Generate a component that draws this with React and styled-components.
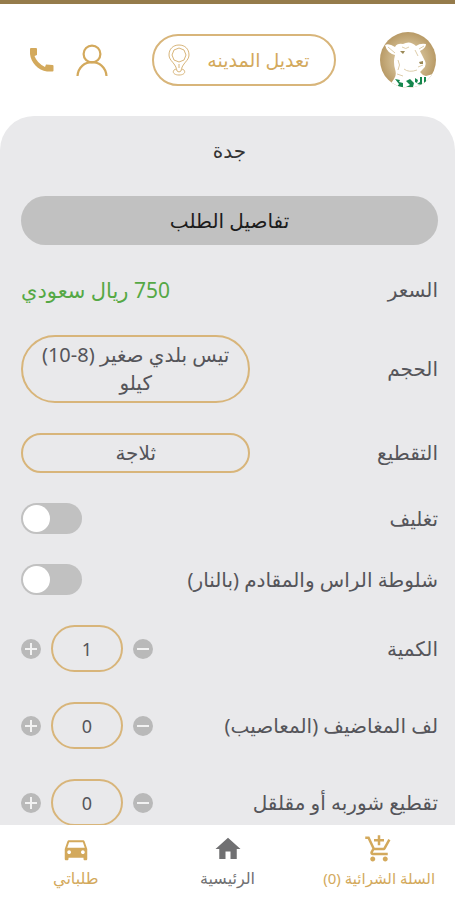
import React, { useState } from 'react';
import styled, { createGlobalStyle } from 'styled-components';
import { MdHome, MdDirectionsCar, MdAddShoppingCart } from 'react-icons/md';

const gold = '#d3a95c';
const outline = '#d8b57a';

const GlobalStyle = createGlobalStyle`
  * {
    box-sizing: border-box;
  }

  body {
    margin: 0;
    background: #fff;
    color: #55555a;
    font-family: 'Noto Sans', 'DejaVu Sans', sans-serif;
    font-size: 20px;
    line-height: 28px;
  }

  button, input {
    font: inherit;
    color: inherit;
  }

  button {
    cursor: pointer;
  }
`;

const Page = styled.div`
  display: flex;
  flex-direction: column;
  min-height: 100vh;
  border-top: 4px solid #957b4b;
`;

const Header = styled.header`
  display: flex;
  align-items: center;
  justify-content: space-between;
  height: 112px;
  padding: 0 18px 0 26px;
`;

const LogoLink = styled.a`
  display: flex;
`;

const CityButton = styled.button`
  display: flex;
  align-items: center;
  justify-content: space-between;
  width: 184px;
  height: 52px;
  padding: 0 24px 0 14px;
  border: 2px solid ${outline};
  border-radius: 26px;
  background: none;
  color: ${gold};
  font-size: 19px;
`;

const HeaderIcons = styled.div`
  display: flex;
  align-items: center;
  gap: 20px;
`;

const IconLink = styled.a`
  display: flex;
  color: ${gold};
`;

const Panel = styled.main`
  display: flex;
  flex: 1;
  flex-direction: column;
  gap: 30px;
  padding: 20px 17px 108px 21px;
  border-radius: 34px 34px 0 0;
  background: #e9e9eb;
`;

const City = styled.h1`
  margin: 0;
  color: #333;
  font-size: 20px;
  font-weight: 400;
  line-height: 30px;
  text-align: center;
`;

const SectionTitle = styled.h2`
  margin: 0;
  border-radius: 25px;
  background: #c1c1c1;
  color: #1c1c1c;
  font-size: 20px;
  font-weight: 400;
  line-height: 49px;
  text-align: center;
`;

const Row = styled.div`
  display: flex;
  align-items: center;
  justify-content: space-between;
`;

const Price = styled.span`
  color: #55a845;
  font-size: 21px;
  line-height: 30px;
`;

const Choice = styled.button`
  width: 55%;
  padding: 4px 12px;
  border: 2px solid ${outline};
  border-radius: 35px;
  background: none;
`;

const Switch = styled.input`
  display: flex;
  flex: none;
  width: 61px;
  height: 31px;
  margin: 0;
  padding: 2px;
  border-radius: 16px;
  background: #c1c1c1;
  appearance: none;
  direction: ltr;
  cursor: pointer;

  &::before {
    content: '';
    width: 27px;
    height: 27px;
    border-radius: 50%;
    background: #fff;
  }

  &:checked {
    justify-content: flex-end;
    background: ${gold};
  }
`;

const Stepper = styled.div`
  display: flex;
  align-items: center;
  gap: 10px;
`;

const StepButton = styled.button`
  display: flex;
  padding: 0;
  border: 0;
  border-radius: 50%;
  background: #b9b9b9;
  color: #f2f2f2;
`;

const Quantity = styled.input`
  width: 72px;
  height: 47px;
  padding: 0;
  border: 2px solid ${outline};
  border-radius: 24px;
  background: none;
  font-size: 18px;
  text-align: center;
`;

const TabBar = styled.nav`
  position: fixed;
  right: 0;
  bottom: 0;
  left: 0;
  display: grid;
  grid-template-columns: repeat(3, 1fr);
  height: 75px;
  padding-top: 9px;
  background: #fff;
`;

const Tab = styled.a`
  display: flex;
  flex-direction: column;
  align-items: center;
  color: ${(props) => (props.$active ? '#707072' : gold)};
  font-size: ${(props) => (props.$long ? '15px' : '16px')};
  line-height: 28px;
  text-decoration: none;
  white-space: nowrap;
`;

const Logo = () => (
  <svg width="58" height="58" viewBox="0 0 58 58" role="img" aria-label="الشعار">
    <defs>
      <radialGradient id="coin">
        <stop offset="0" stopColor="#dfcfae" />
        <stop offset="0.6" stopColor="#cdb68a" />
        <stop offset="1" stopColor="#b89a66" />
      </radialGradient>
      <clipPath id="coin-edge">
        <circle cx="29" cy="29" r="28" />
      </clipPath>
    </defs>
    <circle cx="29" cy="29" r="28" fill="url(#coin)" />
    <g clipPath="url(#coin-edge)">
      <path
        d="M6 14 Q10 12 16 16 Q18 12 24 13 Q31 9 37 15 Q41 12 47 13 Q47 17 41 20 Q43 24 46 30 Q48 35 44 38 L41 41 Q43 44 47 45 L54 43 V58 H8 L15 48 Q18 44 16 38 Q14 31 16 24 Q8 22 6 14Z"
        fill="#fff"
      />
      <path
        d="M9 16 L16 22 M45 15 L40 18 M19 29 Q22 34 19 39 M25 38 Q30 42 38 39 M36 19 L39 25 M18 43 L24 45 M39 36 L44 34 M23 16 Q27 19 30 16"
        fill="none"
        stroke="#ddcdab"
        strokeWidth="1"
      />
      <path d="M21 20 L26 20 L24 23Z M40 31 L44 30 L44 33 L41 33Z" fill="#9a8957" />
      <path
        d="M16 48 L21 49 L20 51 L24 52 L24 56 H18 L20 53Z M27 50 L31 48 L35 52 L34 56 L27 56 L31 54Z M36 47 L39 49 L38 52 L36 51Z M38 53 L41 51 L41 46 L43 46 L43 54Z M45 46 H47 V52 H45Z"
        fill="#15864d"
      />
    </g>
  </svg>
);

const PinIcon = () => (
  <svg width="22" height="32" viewBox="0 0 22 32" fill="none" stroke={outline} strokeWidth="1" aria-hidden="true">
    <path d="M11 1 C5 1 1 5 1 11 C1 17 8 19 9 27 Q11 29 13 27 C14 19 21 17 21 11 C21 5 17 1 11 1Z" />
    <path d="M11 4 L16 6 L18 11 L16 16 L11 18 L6 16 L4 11 L6 6Z" />
    <path d="M8 25 C4 26 4 31 11 31 C18 31 18 26 14 25 M11 20 V24" />
  </svg>
);

const UserIcon = () => (
  <svg width="32" height="33" viewBox="0 0 32 33" fill="none" stroke="currentColor" strokeWidth="2.2" aria-hidden="true">
    <circle cx="16" cy="10" r="8.4" />
    <path d="M1.5 32 C3 13.6 29 13.6 30.5 32" />
  </svg>
);

const PhoneIcon = () => (
  <svg width="30" height="30" viewBox="0 0 30 30" fill="currentColor" aria-hidden="true">
    <path d="M5 3 H10 Q11 3 11 4 V10 L8.5 11 Q11 18 19 22 L20 19.5 L26.5 20 Q27.500 20 27.500 21 V25.500 Q27.500 26.500 26.500 26.500 H21 C12 25 5 18 4 9 V4 Q4 3 5 3Z" />
  </svg>
);

const StepIcon = ({ plus }) => (
  <svg width="20" height="20" viewBox="0 0 20 20" stroke="currentColor" strokeWidth="2" aria-hidden="true">
    <path d={plus ? 'M4 10 H16 M10 4 V16' : 'M4 10 H16'} />
  </svg>
);

const QuantityRow = ({ id, label, initial }) => {
  const [count, setCount] = useState(initial);

  return (
    <Row>
      <label htmlFor={id}>{label}</label>
      <Stepper>
        <StepButton type="button" aria-label="إنقاص" onClick={() => setCount(Math.max(0, count - 1))}>
          <StepIcon />
        </StepButton>
        <Quantity
          id={id}
          inputMode="numeric"
          value={count}
          onChange={(event) => setCount(Number(event.target.value) || 0)}
        />
        <StepButton type="button" aria-label="زيادة" onClick={() => setCount(count + 1)}>
          <StepIcon plus />
        </StepButton>
      </Stepper>
    </Row>
  );
};

const App = () => (
  <Page dir="rtl" lang="ar">
    <GlobalStyle />
    <Header>
      <LogoLink href="#home"><Logo /></LogoLink>
      <CityButton type="button">
        تعديل المدينه
        <PinIcon />
      </CityButton>
      <HeaderIcons>
        <IconLink href="#account" aria-label="حسابي"><UserIcon /></IconLink>
        <IconLink href="#call" aria-label="اتصل بنا"><PhoneIcon /></IconLink>
      </HeaderIcons>
    </Header>

    <Panel>
      <City>جدة</City>
      <SectionTitle>تفاصيل الطلب</SectionTitle>
      <Row>
        <span>السعر</span>
        <Price>750 ريال سعودي</Price>
      </Row>
      <Row>
        <label htmlFor="size">الحجم</label>
        <Choice id="size" type="button">تيس بلدي صغير (8-10) كيلو</Choice>
      </Row>
      <Row>
        <label htmlFor="cut">التقطيع</label>
        <Choice id="cut" type="button">ثلاجة</Choice>
      </Row>
      <Row>
        <label htmlFor="wrap">تغليف</label>
        <Switch id="wrap" type="checkbox" role="switch" />
      </Row>
      <Row>
        <label htmlFor="grill">شلوطة الراس والمقادم (بالنار)</label>
        <Switch id="grill" type="checkbox" role="switch" />
      </Row>
      <QuantityRow id="amount" label="الكمية" initial={1} />
      <QuantityRow id="rolls" label="لف المغاضيف (المعاصيب)" initial={0} />
      <QuantityRow id="soup" label="تقطيع شوربه أو مقلقل" initial={0} />
    </Panel>

    <TabBar>
      <Tab href="#cart" $long>
        <MdAddShoppingCart size={30} />
        السلة الشرائية (0)
      </Tab>
      <Tab href="#home" $active>
        <MdHome size={30} />
        الرئيسية
      </Tab>
      <Tab href="#orders">
        <MdDirectionsCar size={30} />
        طلباتي
      </Tab>
    </TabBar>
  </Page>
);

export default App;
